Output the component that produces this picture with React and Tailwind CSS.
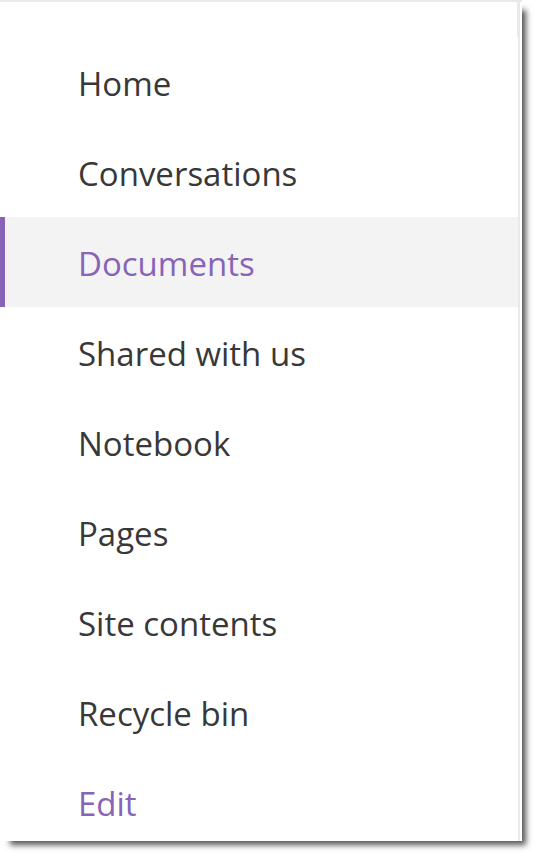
const items = ['Home', 'Conversations', 'Documents', 'Shared with us', 'Notebook', 'Pages', 'Site contents', 'Recycle bin'];

export default function App() {
  return (
    <div className="min-h-screen overflow-hidden bg-white pr-[15px] pb-[15px]">
      <div className="border-t-2 border-[#e9e9e9] bg-white pr-0.5 shadow-[7px_7px_6px_-3px_#555555]">
        <nav
          aria-label="Site"
          className="border-r-2 border-[#e9e9e9] font-['Open_Sans','Noto_Sans',sans-serif] text-[33px] leading-[94px] text-[#383838]"
        >
          <div className="h-[35px] border-r border-[#e9e9e9]" />
          <ul>
            {items.map((item) => (
              <li key={item}>
                <a
                  href="#"
                  aria-current={item === 'Documents' ? 'page' : undefined}
                  className={
                    item === 'Documents'
                      ? 'block h-[90px] border-l-[5px] border-[#8764b8] bg-[#f3f3f3] pl-[73px] text-[#8764b8]'
                      : 'block h-[90px] pl-[78px]'
                  }
                >
                  {item}
                </a>
              </li>
            ))}
          </ul>
          <button type="button" className="flex h-[84px] items-start pl-[78px] text-[#8764b8]">Edit</button>
        </nav>
      </div>
    </div>
  );
}
